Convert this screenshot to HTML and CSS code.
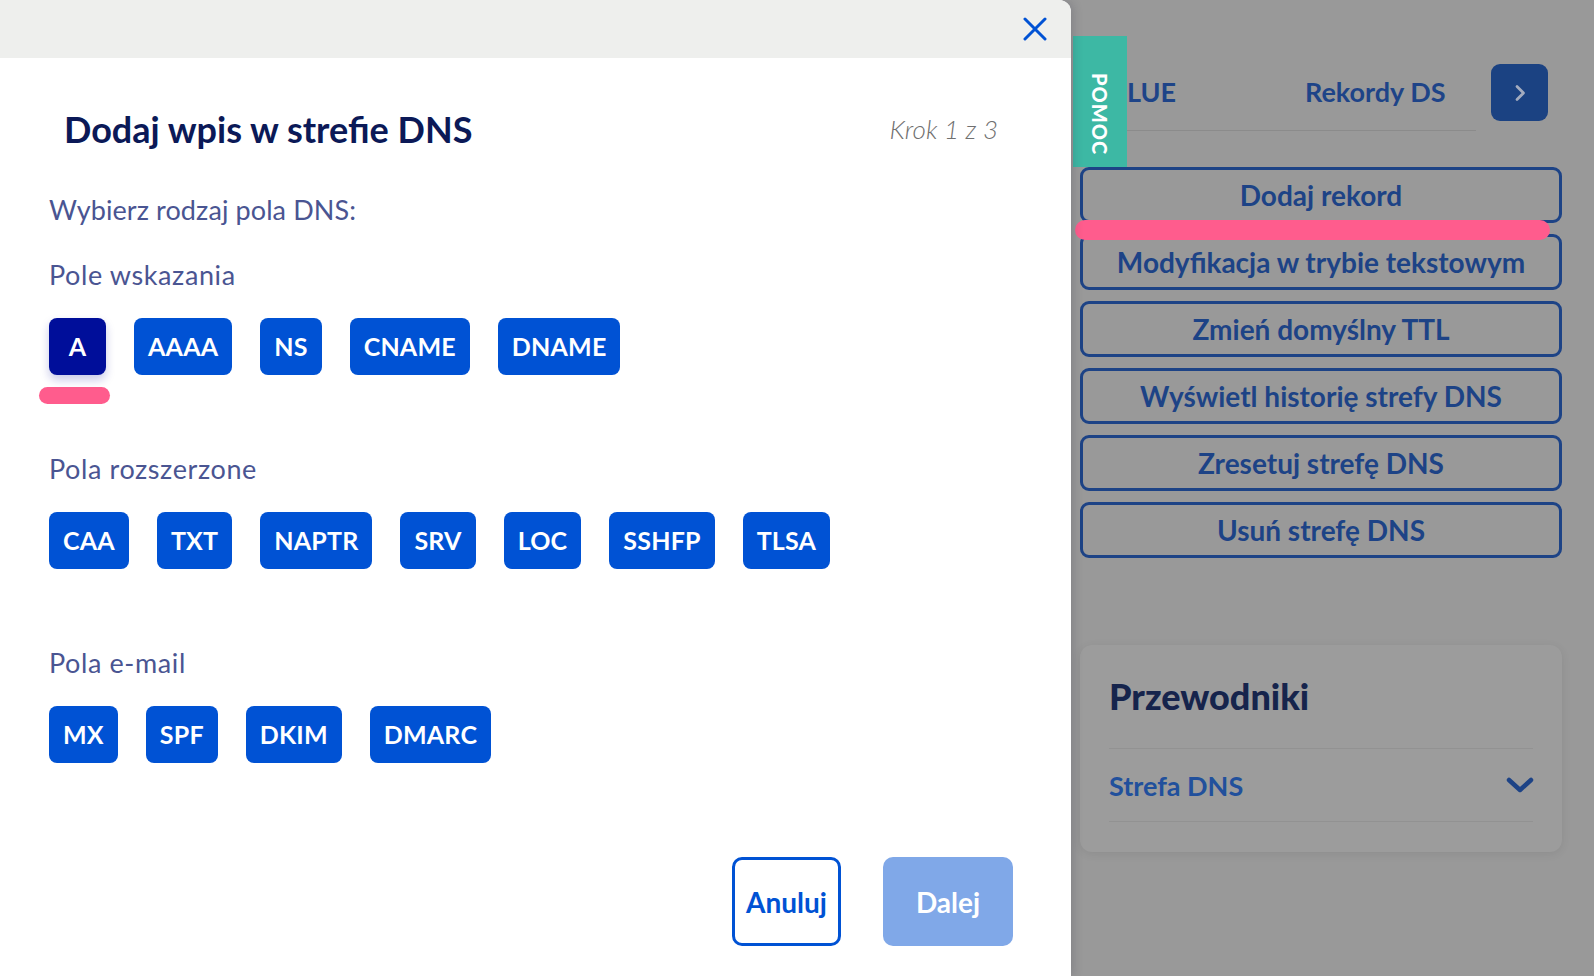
FILE: index.html
```html
<!DOCTYPE html>
<html lang="pl">
<head>
<meta charset="utf-8">
<title>Dodaj wpis w strefie DNS</title>
<link rel="stylesheet" href="styles.css">
</head>
<body>
<div class="screen">
  <section class="modal">
    <header class="modal-head">
      <button class="close" aria-label="Zamknij">
        <svg width="24" height="24" viewBox="0 0 24 24"><path d="M2 2 L22 22 M22 2 L2 22" stroke="#0052d4" stroke-width="3" fill="none" stroke-linecap="round"/></svg>
      </button>
    </header>
    <div class="modal-body">
      <div class="title-row">
        <h1 class="title">Dodaj wpis w strefie DNS</h1>
        <span class="step">Krok 1 z 3</span>
      </div>
      <p class="lead">Wybierz rodzaj pola DNS:</p>

      <div class="group group-first">
        <h2 class="group-label">Pole wskazania</h2>
        <div class="chips">
          <button class="chip chip-active">A</button>
          <button class="chip">AAAA</button>
          <button class="chip">NS</button>
          <button class="chip">CNAME</button>
          <button class="chip">DNAME</button>
        </div>
        <div class="marker"></div>
      </div>

      <div class="group group-second">
        <h2 class="group-label">Pola rozszerzone</h2>
        <div class="chips">
          <button class="chip">CAA</button>
          <button class="chip">TXT</button>
          <button class="chip">NAPTR</button>
          <button class="chip">SRV</button>
          <button class="chip">LOC</button>
          <button class="chip">SSHFP</button>
          <button class="chip">TLSA</button>
        </div>
      </div>

      <div class="group group-third">
        <h2 class="group-label">Pola e-mail</h2>
        <div class="chips">
          <button class="chip">MX</button>
          <button class="chip">SPF</button>
          <button class="chip">DKIM</button>
          <button class="chip">DMARC</button>
        </div>
      </div>

      <footer class="modal-foot">
        <button class="btn btn-outline">Anuluj</button>
        <button class="btn btn-disabled">Dalej</button>
      </footer>
    </div>
  </section>

  <aside class="backdrop">
    <div class="tabs-row">
      <div class="tabs">
        <span class="tab tab-first">LUE</span>
        <span class="tab tab-second">Rekordy DS</span>
      </div>
      <button class="next" aria-label="Dalej">
        <svg width="16" height="20" viewBox="0 0 16 20"><path d="M5 3.5 L11.5 10 L5 16.5" stroke="#a4acbf" stroke-width="2.8" fill="none" stroke-linecap="round" stroke-linejoin="round"/></svg>
      </button>
    </div>

    <div class="actions">
      <button class="action">Dodaj rekord</button>
      <button class="action">Modyfikacja w trybie tekstowym</button>
      <button class="action">Zmień domyślny TTL</button>
      <button class="action">Wyświetl historię strefy DNS</button>
      <button class="action">Zresetuj strefę DNS</button>
      <button class="action">Usuń strefę DNS</button>
    </div>

    <div class="card">
      <h3 class="card-title">Przewodniki</h3>
      <div class="guide-list">
        <div class="guide">
          <span>Strefa DNS</span>
          <svg width="28" height="18" viewBox="0 0 28 18"><path d="M3 4 L14 14 L25 4" stroke="#1d4386" stroke-width="4.5" fill="none" stroke-linecap="round" stroke-linejoin="round"/></svg>
        </div>
      </div>
    </div>

    <div class="annot-bar"></div>
    <div class="help-tab"><span>POMOC</span></div>
  </aside>
</div>
</body>
</html>
```

FILE: styles.css
```css
* { box-sizing: border-box; margin: 0; padding: 0; }
html, body { width: 100%; height: 100%; }
body {
  font-family: Lato, "Noto Sans", sans-serif;
  background: #999999;
  overflow: hidden;
}
button { font-family: inherit; cursor: pointer; }

.screen {
  display: flex;
  width: 1594px;
  height: 976px;
}

/* ---------- modal ---------- */
.modal {
  width: 1071px;
  flex: none;
  background: #ffffff;
  border-top-right-radius: 12px;
  box-shadow: 3px 0 10px rgba(40, 40, 60, 0.18);
  display: flex;
  flex-direction: column;
  position: relative;
  z-index: 2;
}
.modal-head {
  height: 58px;
  background: #eeefed;
  border-top-right-radius: 12px;
  display: flex;
  justify-content: flex-end;
  align-items: center;
  padding-right: 24px;
}
.close {
  width: 24px;
  height: 24px;
  border: 0;
  background: none;
}
.close svg { display: block; }

.modal-body {
  padding: 0 58px 0 49px;
  display: flex;
  flex-direction: column;
}
.title-row {
  display: flex;
  justify-content: space-between;
  align-items: center;
  margin-top: 51px;
  padding: 0 15px;
  height: 40px;
}
.title {
  font-size: 36px;
  font-weight: 700;
  line-height: 40px;
  color: #0b1957;
}
.step {
  font-size: 26px;
  font-style: italic;
  font-weight: 300;
  color: #707070;
}
.lead, .group-label {
  font-size: 27px;
  font-weight: 400;
  line-height: 30px;
  color: #4a5592;
}
.lead { margin-top: 46px; letter-spacing: 0.1px; }
.group-label { letter-spacing: 0.6px; }
.group-first { margin-top: 35px; }
.group-second { margin-top: 50px; }
.group-third { margin-top: 79px; }

.chips {
  display: flex;
  gap: 28px;
  margin-top: 28px;
}
.chip {
  height: 57px;
  min-width: 57px;
  padding: 0 14px;
  border: 0;
  border-radius: 8px;
  background: #0052d4;
  color: #ffffff;
  font-size: 25px;
  font-weight: 700;
  line-height: 57px;
  letter-spacing: 0.2px;
}
.chip-active {
  background: #000e9a;
  box-shadow: 0 5px 10px rgba(0, 14, 154, 0.22);
}
.marker {
  width: 71px;
  height: 17px;
  margin: 12px 0 0 -10px;
  border-radius: 9px;
  background: #ff5c8d;
}

.modal-foot {
  margin-top: 94px;
  display: flex;
  justify-content: flex-end;
  gap: 42px;
}
.btn {
  height: 89px;
  border-radius: 10px;
  font-size: 28px;
  font-weight: 700;
}
.btn-outline {
  width: 109px;
  border: 3px solid #0052d4;
  background: #ffffff;
  color: #0052d4;
}
.btn-disabled {
  width: 130px;
  border: 0;
  background: #80a8e8;
  color: #ffffff;
}

/* ---------- dimmed page ---------- */
.backdrop {
  flex: 1;
  position: relative;
  padding: 64px 32px 0 9px;
  background: #999999;
}
.tabs-row {
  display: flex;
  align-items: flex-start;
  margin-left: -7px;
}
.tabs {
  width: 403px;
  height: 67px;
  border-bottom: 1px solid #8b8b8b;
  display: flex;
}
.tab {
  flex: 1;
  font-size: 27px;
  font-weight: 700;
  line-height: 56px;
  color: #1e4488;
}
.tab-first { padding-left: 54px; }
.tab-second { text-align: center; padding-right: 18px; }
.next {
  width: 57px;
  height: 57px;
  margin-left: 15px;
  border: 0;
  border-radius: 9px;
  background: #1b4282;
  display: flex;
  align-items: center;
  justify-content: center;
}

.actions {
  margin-top: 36px;
  display: flex;
  flex-direction: column;
  gap: 11px;
}
.action {
  height: 56px;
  border: 3px solid #1d4386;
  border-radius: 9px;
  background: transparent;
  color: #1d4386;
  font-size: 28px;
  font-weight: 700;
}

.card {
  margin-top: 87px;
  background: #9c9c9c;
  border-radius: 12px;
  box-shadow: 0 2px 10px rgba(0, 0, 0, 0.08);
  padding: 29px 29px 30px;
}
.card-title {
  font-size: 36px;
  font-weight: 900;
  line-height: 44px;
  color: #16244c;
}
.guide-list {
  margin-top: 30px;
  border-top: 1px solid #929292;
  border-bottom: 1px solid #929292;
}
.guide {
  height: 72px;
  display: flex;
  align-items: center;
  justify-content: space-between;
  font-size: 27px;
  font-weight: 700;
  color: #21509c;
}
.guide svg { display: block; margin-right: -1px; }

.annot-bar {
  position: absolute;
  left: 4px;
  top: 220px;
  width: 475px;
  height: 20px;
  border-radius: 10px;
  background: #ff5c8d;
}
.help-tab {
  position: absolute;
  left: 2px;
  top: 36px;
  width: 54px;
  height: 131px;
  padding-top: 26px;
  background: #3db8a4;
  display: flex;
  align-items: center;
  justify-content: center;
  color: #ffffff;
  font-size: 20px;
  font-weight: 900;
  letter-spacing: 1px;
}
.help-tab span { writing-mode: vertical-rl; }
```
